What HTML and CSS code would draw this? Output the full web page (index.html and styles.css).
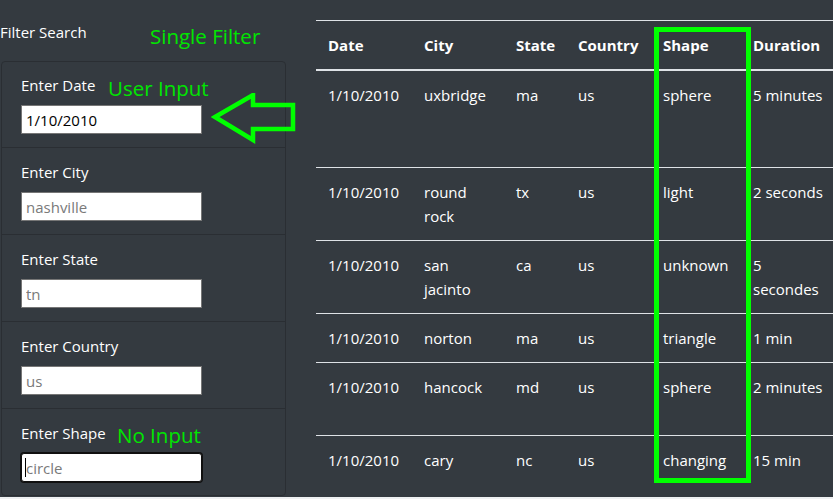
FILE: index.html
```html
<!DOCTYPE html>
<html lang="en">
<head>
<meta charset="utf-8">
<title>UFO Sightings</title>
<link rel="stylesheet" href="styles.css">
</head>
<body>
<div class="page">
  <aside class="sidebar">
    <div class="filter-title">Filter Search</div>
    <ul class="filters">
      <li class="filter">
        <label class="filter-label" for="date">Enter Date</label>
        <input class="filter-input" id="date" type="text" value="1/10/2010">
      </li>
      <li class="filter">
        <label class="filter-label" for="city">Enter City</label>
        <input class="filter-input" id="city" type="text" placeholder="nashville">
      </li>
      <li class="filter">
        <label class="filter-label" for="state">Enter State</label>
        <input class="filter-input" id="state" type="text" placeholder="tn">
      </li>
      <li class="filter">
        <label class="filter-label" for="country">Enter Country</label>
        <input class="filter-input" id="country" type="text" placeholder="us">
      </li>
      <li class="filter">
        <label class="filter-label" for="shape">Enter Shape</label>
        <div class="field">
          <input class="filter-input is-focused" id="shape" type="text" placeholder="circle">
          <span class="caret"></span>
        </div>
      </li>
    </ul>
  </aside>
  <main class="results">
    <table class="sightings">
      <colgroup>
        <col class="c-date"><col class="c-city"><col class="c-state"><col class="c-country"><col class="c-shape"><col class="c-duration">
      </colgroup>
      <thead>
        <tr><th>Date</th><th>City</th><th>State</th><th>Country</th><th>Shape</th><th>Duration</th></tr>
      </thead>
      <tbody>
        <tr class="h3"><td>1/10/2010</td><td>uxbridge</td><td>ma</td><td>us</td><td>sphere</td><td>5 minutes</td></tr>
        <tr class="h2"><td>1/10/2010</td><td>round rock</td><td>tx</td><td>us</td><td>light</td><td>2 seconds</td></tr>
        <tr class="h2"><td>1/10/2010</td><td>san jacinto</td><td>ca</td><td>us</td><td>unknown</td><td>5 secondes</td></tr>
        <tr class="h1"><td>1/10/2010</td><td>norton</td><td>ma</td><td>us</td><td>triangle</td><td>1 min</td></tr>
        <tr class="h2"><td>1/10/2010</td><td>hancock</td><td>md</td><td>us</td><td>sphere</td><td>2 minutes</td></tr>
        <tr class="h2"><td>1/10/2010</td><td>cary</td><td>nc</td><td>us</td><td>changing</td><td>15 min</td></tr>
      </tbody>
    </table>
  </main>
</div>

<div class="note note-single">Single Filter</div>
<div class="note note-user">User Input</div>
<div class="note note-none">No Input</div>
<svg class="arrow" width="90" height="52" viewBox="0 0 90 52">
  <polygon points="4,24 42,2 42,12 82,12 82,36 42,36 42,47" fill="none" stroke="#00ff00" stroke-width="4.5" stroke-linejoin="miter"/>
</svg>
<div class="highlight"></div>
</body>
</html>
```
FILE: styles.css
```css
html {
  background: #eef0f2;
}
body {
  margin: 0;
  height: 497px;
  overflow: hidden;
  background: #343a40;
  color: #ffffff;
  font-family: "Open Sans", "Noto Sans", sans-serif;
  font-size: 15px;
  line-height: 24px;
  position: relative;
}
.page {
  display: flex;
  align-items: flex-start;
}
.sidebar {
  width: 286px;
  flex: 0 0 286px;
}
.filter-title {
  padding-top: 20px;
  height: 24px;
  margin-bottom: 17px;
}
.filters {
  list-style: none;
  margin: 0 0 0 1px;
  padding: 0;
  border: 1px solid #2a2e33;
  border-radius: 4px;
}
.filter {
  padding: 12px 19px 13px 19px;
  border-top: 1px solid #2a2e33;
}
.filter:first-child {
  border-top: 0;
  padding-top: 11px;
}
.filter-label {
  display: block;
  height: 24px;
  margin-bottom: 8px;
}
.field {
  position: relative;
  width: 181px;
}
.filter-input {
  display: block;
  box-sizing: border-box;
  width: 181px;
  height: 29px;
  margin: 0;
  padding: 1px 4px;
  border: 1px solid #767676;
  border-radius: 0;
  background: #ffffff;
  color: #000000;
  font-family: "Open Sans", "Noto Sans", sans-serif;
  font-size: 15px;
  outline: none;
}
.filter-input::placeholder {
  color: #7a7a7a;
}
.filter-input.is-focused {
  border-color: #101010;
  border-radius: 3px;
  box-shadow: 0 0 0 1px #101010;
}
.caret {
  position: absolute;
  left: 4px;
  top: 5px;
  width: 1px;
  height: 19px;
  background: #000;
}
.results {
  flex: 1 1 auto;
  padding: 20px 0 0 30px;
  min-width: 0;
}
.sightings {
  table-layout: fixed;
  width: 525px;
  border-collapse: collapse;
}
.c-date { width: 96px; }
.c-city { width: 92px; }
.c-state { width: 62px; }
.c-country { width: 85px; }
.c-shape { width: 90px; }
.c-duration { width: 100px; }
.sightings th,
.sightings td {
  padding: 12px;
  text-align: left;
  vertical-align: top;
}
.sightings th {
  font-weight: 700;
  border-top: 1px solid #dee2e6;
  border-bottom: 2px solid #dee2e6;
  height: 24px;
}
.sightings td {
  border-bottom: 1px solid #dee2e6;
}
.h1 td { height: 24px; }
.h2 td { height: 48px; }
.h3 td { height: 72px; }
.note {
  position: absolute;
  color: #00e600;
  font-size: 20.5px;
  line-height: 24px;
}
.note-single { left: 150px; top: 24px; }
.note-user { left: 108px; top: 76px; }
.note-none { left: 117px; top: 423px; }
.arrow {
  position: absolute;
  left: 211px;
  top: 93px;
}
.highlight {
  position: absolute;
  left: 654px;
  top: 27px;
  width: 87px;
  height: 446px;
  border: 5px solid #00ff00;
}
```
